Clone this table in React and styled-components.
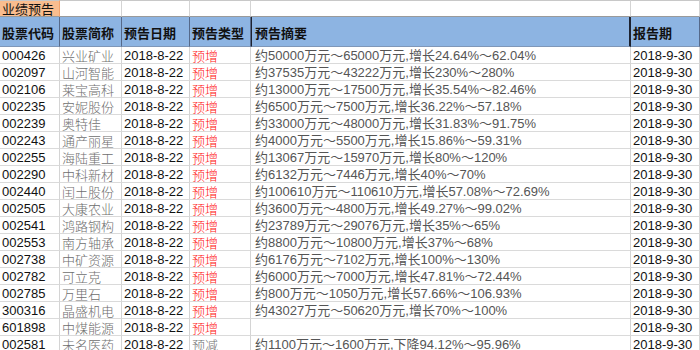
import React from "react";
import styled, { createGlobalStyle } from "styled-components";

const GlobalStyle = createGlobalStyle`
  body {
    margin: 0;
    background: #ffffff;
    font-family: "Liberation Sans", Arial, "Noto Sans CJK SC", sans-serif;
  }
`;

const rows = [
  ["000426", "兴业矿业", "预增", "约50000万元～65000万元,增长24.64%～62.04%"],
  ["002097", "山河智能", "预增", "约37535万元～43222万元,增长230%～280%"],
  ["002106", "莱宝高科", "预增", "约13000万元～17500万元,增长35.54%～82.46%"],
  ["002235", "安妮股份", "预增", "约6500万元～7500万元,增长36.22%～57.18%"],
  ["002239", "奥特佳", "预增", "约33000万元～48000万元,增长31.83%～91.75%"],
  ["002243", "通产丽星", "预增", "约4000万元～5500万元,增长15.86%～59.31%"],
  ["002255", "海陆重工", "预增", "约13067万元～15970万元,增长80%～120%"],
  ["002290", "中科新材", "预增", "约6132万元～7446万元,增长40%～70%"],
  ["002440", "闰土股份", "预增", "约100610万元～110610万元,增长57.08%～72.69%"],
  ["002505", "大康农业", "预增", "约3600万元～4800万元,增长49.27%～99.02%"],
  ["002541", "鸿路钢构", "预增", "约23789万元～29076万元,增长35%～65%"],
  ["002553", "南方轴承", "预增", "约8800万元～10800万元,增长37%～68%"],
  ["002738", "中矿资源", "预增", "约6176万元～7102万元,增长100%～130%"],
  ["002782", "可立克", "预增", "约6000万元～7000万元,增长47.81%～72.44%"],
  ["002785", "万里石", "预增", "约800万元～1050万元,增长57.66%～106.93%"],
  ["300316", "晶盛机电", "预增", "约43027万元～50620万元,增长70%～100%"],
  ["601898", "中煤能源", "预增", ""],
  ["002581", "未名医药", "预减", "约1100万元～1600万元,下降94.12%～95.96%"],
];

const headers = ["股票代码", "股票简称", "预告日期", "预告类型", "预告摘要", "报告期"];

const Sheet = styled.div`
  display: grid;
  grid-template-columns: 60px 62px 68px 61px 380px 69px;
  grid-template-rows: 17px 30px;
  grid-auto-rows: 17px;
  width: 700px;
  height: 350px;
  overflow: hidden;
`;

const TitleCell = styled.div`
  box-sizing: border-box;
  border-top: 1px solid #c8c8c8;
  border-right: 1px solid ${(p) => (p.$accent ? "#f2a36e" : "#d4d4d4")};
  border-bottom: 1px solid #9a9a9a;
  background: ${(p) => (p.$accent ? "#f9bd8f" : "#ffffff")};
  font-family: "Noto Sans CJK SC", sans-serif;
  font-size: 13px;
  line-height: 15px;
  padding-left: 2px;
  color: #111;
  white-space: nowrap;
`;

const HeadCell = styled.div`
  box-sizing: border-box;
  background: #8db4e2;
  border-right: ${(p) => (p.$strong ? "2px solid #1d2230" : "1px solid #55698a")};
  border-left: ${(p) => (p.$lead ? "1px solid #1d2230" : "none")};
  border-bottom: 1px solid #7f97b8;
  display: flex;
  align-items: center;
  padding: 2px 0 0 ${(p) => (p.$lead ? "3px" : "2px")};
  font-family: "Noto Sans CJK SC", sans-serif;
  font-weight: 700;
  font-size: 13px;
  line-height: 16px;
  color: #111;
  white-space: nowrap;
`;

const Cell = styled.div`
  box-sizing: border-box;
  border-right: 1px solid #d4d4d4;
  border-bottom: 1px solid #dadada;
  padding: 1px 0 0 ${(p) => (p.$wide ? "4px" : "2px")};
  font-size: 13px;
  line-height: 16px;
  color: ${(p) => p.$color || "#111"};
  font-family: ${(p) =>
    p.$cjk
      ? '"Noto Sans CJK SC", sans-serif'
      : '"Liberation Sans", Arial, "Noto Sans CJK SC", sans-serif'};
  font-weight: ${(p) => (p.$cjk ? 300 : 400)};
  white-space: nowrap;
`;

export default function App() {
  return (
    <>
      <GlobalStyle />
      <Sheet>
        <TitleCell $accent>业绩预告</TitleCell>
        <TitleCell />
        <TitleCell />
        <TitleCell />
        <TitleCell />
        <TitleCell />
        {headers.map((h, i) => (
          <HeadCell key={h} $lead={i === 4} $strong={i === 4}>
            {h}
          </HeadCell>
        ))}
        {rows.map(([code, name, kind, summary]) => (
          <React.Fragment key={code}>
            <Cell>{code}</Cell>
            <Cell $cjk $color="#6e6e6e">{name}</Cell>
            <Cell>2018-8-22</Cell>
            <Cell $cjk $color={kind === "预增" ? "#ff1010" : "#6e6e6e"}>{kind}</Cell>
            <Cell $wide $color="#555555">{summary}</Cell>
            <Cell>2018-9-30</Cell>
          </React.Fragment>
        ))}
      </Sheet>
    </>
  );
}
